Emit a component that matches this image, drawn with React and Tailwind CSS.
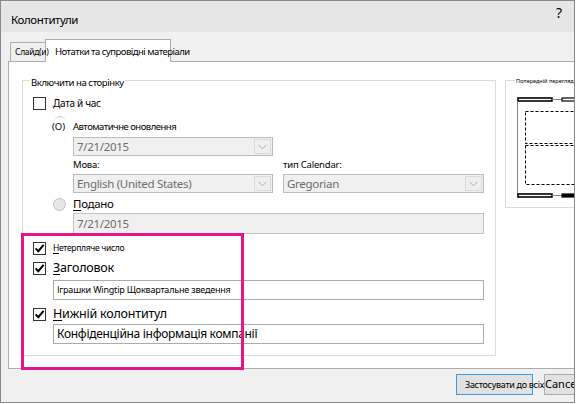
import React from "react";

const ui = "font-['Noto_Sans',sans-serif]";

function Check({ checked }) {
  return (
    <span className="flex h-[13px] w-[13px] shrink-0 items-center justify-center border border-[#333] bg-white">
      {checked && (
        <svg width="11" height="11" viewBox="0 0 11 11">
          <path d="M1.6 5.4 L4.3 8.2 L9.6 1.9" fill="none" stroke="#000" strokeWidth="2" />
        </svg>
      )}
    </span>
  );
}

function Combo({ value, width = "w-[201px]" }) {
  return (
    <div className={`flex h-[19px] ${width} items-stretch border border-[#bcbcbc] bg-[#f0f0f0]`}>
      <span className="flex-1 pl-[3px] text-[11.5px] leading-[17px] tracking-[-0.3px] text-[#6d6d6d]">{value}</span>
      <span className="m-px flex w-[17px] items-center justify-center border border-[#dadada]">
        <svg width="9" height="6" viewBox="0 0 9 6">
          <path d="M0.5 0.8 L4.5 4.8 L8.5 0.8" fill="none" stroke="#a8a8a8" />
        </svg>
      </span>
    </div>
  );
}

function Underlined({ first, rest }) {
  return (
    <span>
      <span className="underline decoration-1 underline-offset-2">{first}</span>
      {rest}
    </span>
  );
}

function Preview() {
  return (
    <svg width="70" height="102" viewBox="0 0 70 102" className="ml-[11px] mt-[2px]">
      {/* header bars */}
      <rect x="1" y="1" width="34" height="3" fill="#fff" stroke="#000" strokeWidth="1.6" />
      <line x1="35" y1="2.5" x2="45" y2="2.5" stroke="#888" strokeWidth="1" />
      <rect x="45" y="1" width="30" height="3" fill="#fff" stroke="#000" strokeWidth="1.2" />
      {/* page edge */}
      <line x1="0.5" y1="4" x2="0.5" y2="97" stroke="#888" strokeWidth="1" />
      {/* content placeholders */}
      <rect x="8.5" y="14.5" width="70" height="32" fill="none" stroke="#000" strokeDasharray="3 2" />
      <rect x="8.5" y="48.5" width="70" height="39" fill="none" stroke="#000" strokeDasharray="3 2" />
      {/* footer bars */}
      <rect x="1" y="97" width="34" height="3" fill="#fff" stroke="#000" strokeWidth="1.6" />
      <line x1="35" y1="98.5" x2="45" y2="98.5" stroke="#888" strokeWidth="1" />
      <rect x="45" y="97" width="30" height="3" fill="#000" stroke="#000" strokeWidth="1.2" />
    </svg>
  );
}

export default function App() {
  return (
    <div className={`${ui} relative h-[403px] w-[575px] overflow-hidden border border-[#8a8a8a] bg-[#f0f0f0] text-black`}>
      {/* title bar */}
      <div className="flex h-[31px] items-center justify-between bg-[#e6e6e6] pl-[10px] pr-[12px]">
        <span className="mt-[7px] text-[11.5px] tracking-[-0.4px]">Колонтитули</span>
        <span className="mb-[8px] text-[14px]">?</span>
      </div>

      {/* tabs */}
      <div className="ml-[9px] mt-[7px] flex h-[22px] items-start">
        <div className="mt-[3px] flex h-[19px] w-[35px] items-center whitespace-nowrap border-l border-t border-[#adadad] bg-[#f0f0f0] pl-[4px] text-[8.5px] tracking-[-0.3px]">
          <span className="relative z-20">Слайд(и)</span>
        </div>
        <div className="relative z-10 flex h-[23px] w-[126px] items-center whitespace-nowrap border-l border-r border-t border-[#adadad] bg-white pl-[9px] text-[9.5px] tracking-[-0.5px]">
          <span className="mt-[3px]">Нотатки та супровідні матеріали</span>
        </div>
      </div>

      {/* tab panel */}
      <div className="ml-[7px] flex h-[308px] w-[600px] items-start border border-[#adadad] bg-white">
        {/* include group */}
        <div className="relative ml-[13px] mt-[18px] flex h-[276px] w-[474px] flex-col border border-[#dcdcdc] pl-[10px]">
          <span className="absolute left-[7px] top-[-4px] bg-white px-px text-[9.5px] leading-[12px] tracking-[-0.4px]">
            Включити на сторінку
          </span>

          <div className="mt-[16px] flex h-[13px] items-center gap-[7px] text-[10px] tracking-[-0.3px]">
            <Check />
            <span>Дата й час</span>
          </div>

          <div className="ml-[19px] mt-[10px] flex h-[14px] items-center">
            <span className="relative w-[20px] text-[9.5px]">
              <span className="absolute left-[3px] top-[-4px] h-[6px] w-[10px] rounded-t-full border-t border-[#cfcfcf]" />
              (O)
            </span>
            <span className="ml-[1px] text-[9.5px] tracking-[-0.5px]">Автоматичне оновлення</span>
          </div>

          <div className="ml-[40px] mt-[3px]">
            <Combo value="7/21/2015" width="w-[200px]" />
          </div>

          <div className="ml-[40px] mt-[3px] flex h-[13px] items-center text-[9.5px] tracking-[-0.2px]">
            <span className="w-[210px]">Мова:</span>
            <span>тип Calendar:</span>
          </div>

          <div className="ml-[40px] mt-[2px] flex gap-[10px]">
            <Combo value="English (United States)" width="w-[200px]" />
            <Combo value="Gregorian" width="w-[201px]" />
          </div>

          <div className="ml-[20px] mt-[4px] flex h-[14px] items-center gap-[7px]">
            <span className="h-[13px] w-[13px] rounded-full border border-[#c3c3c3] bg-[#e6e6e6]" />
            <span className="text-[11.5px] tracking-[-0.3px]">
              <Underlined first="П" rest="одано" />
            </span>
          </div>

          <div className="ml-[40px] mt-[2px] flex h-[21px] w-[411px] items-center border border-[#c3c3c3] bg-[#f0f0f0] pl-[3px] text-[11.5px] tracking-[-0.3px] text-[#6d6d6d]">
            7/21/2015
          </div>

          <div className="mt-[8px] flex h-[12px] items-center gap-[7px]">
            <Check checked />
            <span className="text-[8.5px] tracking-[-0.3px]">
              <Underlined first="Н" rest="етерпляче число" />
            </span>
          </div>

          <div className="mt-[8px] flex h-[13px] items-center gap-[7px]">
            <Check checked />
            <span className="text-[12.5px] tracking-[-0.2px]">
              <Underlined first="З" rest="аголовок" />
            </span>
          </div>

          <div className="ml-[20px] mt-[5px] flex h-[20px] w-[431px] items-center border border-[#ababab] bg-white pl-[3px] text-[9px] tracking-[-0.2px]">
            Іграшки Wingtip Щоквартальне зведення
          </div>

          <div className="mt-[8px] flex h-[13px] items-center gap-[7px]">
            <Check checked />
            <span className="text-[12.5px] tracking-[-0.2px]">
              <Underlined first="Н" rest="ижній колонтитул" />
            </span>
          </div>

          <div className="ml-[20px] mt-[3px] flex h-[20px] w-[431px] items-center border border-[#ababab] bg-white pl-[3px] text-[12px] tracking-[-0.3px]">
            Конфіденційна інформація компанії
          </div>
        </div>

        {/* preview group */}
        <div className="relative ml-[9px] mt-[18px] flex h-[128px] w-[100px] flex-col border border-[#dcdcdc] pt-[14px]">
          <span className="absolute left-[9px] top-[-4px] bg-white px-px text-[5.5px] leading-[8px]">
            Попередній перегляд
          </span>
          <Preview />
        </div>
      </div>

      {/* dialog buttons */}
      <div className="ml-[455px] mt-[5px] flex gap-[11px]">
        <div className="relative z-10 flex h-[21px] w-[77px] items-center whitespace-nowrap border border-[#3c9be8] bg-[#e1e1e1] pl-[8px] text-[9px] tracking-[-0.3px]">
          Застосувати до всіх
        </div>
        <div className="flex h-[21px] w-[77px] items-center justify-center border border-[#adadad] bg-[#e1e1e1] text-[11px]">
          Cancel
        </div>
      </div>

      {/* callout frame */}
      <div className="pointer-events-none absolute left-[20px] top-[232px] h-[137px] w-[223px] border-[3px] border-[#e5158a]" />
    </div>
  );
}
